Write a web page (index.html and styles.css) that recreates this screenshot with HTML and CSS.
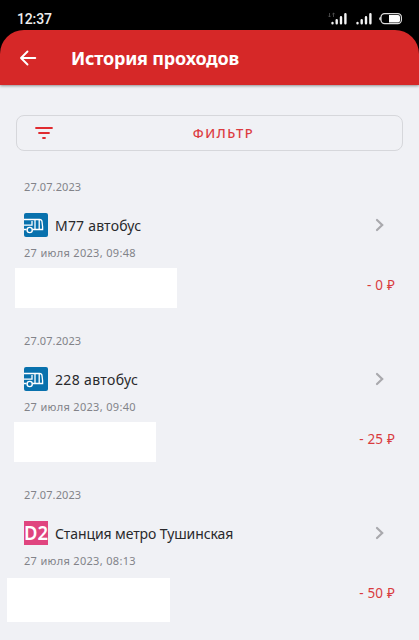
FILE: index.html
```
<!DOCTYPE html>
<html lang="ru">
<head>
    <meta charset="UTF-8">
    <meta name="viewport" content="width=device-width, initial-scale=1.0">
    <title>История проходов</title>
    <link rel="stylesheet" href="styles.css">
</head>
<body>
    <div class="status-bar">
        <span class="clock">12:37</span>
        <svg class="status-icons" width="76" height="14" viewBox="0 0 76 14">
            <g stroke="#555" stroke-width="0.8" fill="none">
                <path d="M2.5 1v4M1.3 3.8l1.2 1.2 1.2-1.2M6.5 5V1M5.3 2.2L6.5 1l1.2 1.2"/>
            </g>
            <g stroke="#f4f4f4" stroke-width="2.4" stroke-linecap="round">
                <path d="M5.5 10.9v.3M9.7 8.3v2.9M14 5.3v5.9M18.4 2.2v9M30.5 10.9v.3M34.7 8.3v2.9M39 5.3v5.9M43.4 2.2v9"/>
            </g>
            <rect x="54" y="1.7" width="20.4" height="10" rx="3.6" fill="none" stroke="#ddd" stroke-width="1.2"/>
            <path d="M53.6 4.8a2 2 0 0 0 0 3.8z" fill="#fff"/>
            <path d="M62 3h9a2 2 0 0 1 2 2v3.4a2 2 0 0 1-2 2h-9z" fill="#fff"/>
        </svg>
    </div>

    <header class="header">
        <svg class="back" width="18" height="18" viewBox="0 0 18 18">
            <path d="M16.3 9H2.2M8.5 2.5L2 9l6.5 6.5"/>
        </svg>
        <h1>История проходов</h1>
    </header>

    <main>
        <button class="filter" type="button">
            <svg width="20" height="14" viewBox="0 0 20 14">
                <path d="M2 2h16M5 7h10M9 12h2"/>
            </svg>
            <span>ФИЛЬТР</span>
        </button>

        <section class="trip">
            <p class="date">27.07.2023</p>
            <div class="trip-title">
                <svg class="badge" viewBox="0 0 24 24">
                    <rect width="24" height="24" rx="2" fill="#0871ad"/>
                    <path d="M0 6.500h15.500q2.300 0 2.500 2l.6 5.200v2.800H8.700M0 12.200h8V8M0 16.500h2.500" fill="none" stroke="#fff" stroke-width="1.3"/>
                    <path d="M11 7v9M15.200 7v9" stroke="#fff" stroke-width="1.3"/>
                    <circle cx="5.7" cy="17" r="2.6" fill="#0871ad" stroke="#fff" stroke-width="1.4"/>
                </svg>
                <h2 class="name-m77">М77 автобус</h2>
                <svg class="chevron" width="10" height="14" viewBox="0 0 10 14"><path d="M2 2l5.2 5L2 12"/></svg>
            </div>
            <p class="time">27 июля 2023, 09:48</p>
            <div class="trip-bottom">
                <div class="blank blank-first"></div>
                <span class="amount">- 0 ₽</span>
            </div>
        </section>

        <section class="trip">
            <p class="date">27.07.2023</p>
            <div class="trip-title">
                <svg class="badge" viewBox="0 0 24 24">
                    <rect width="24" height="24" rx="2" fill="#0871ad"/>
                    <path d="M0 6.500h15.500q2.300 0 2.500 2l.6 5.200v2.800H8.700M0 12.200h8V8M0 16.500h2.500" fill="none" stroke="#fff" stroke-width="1.3"/>
                    <path d="M11 7v9M15.200 7v9" stroke="#fff" stroke-width="1.3"/>
                    <circle cx="5.7" cy="17" r="2.6" fill="#0871ad" stroke="#fff" stroke-width="1.4"/>
                </svg>
                <h2 class="name-228">228 автобус</h2>
                <svg class="chevron" width="10" height="14" viewBox="0 0 10 14"><path d="M2 2l5.2 5L2 12"/></svg>
            </div>
            <p class="time">27 июля 2023, 09:40</p>
            <div class="trip-bottom">
                <div class="blank blank-second"></div>
                <span class="amount">- 25 ₽</span>
            </div>
        </section>

        <section class="trip">
            <p class="date">27.07.2023</p>
            <div class="trip-title">
                <svg class="badge" viewBox="0 0 24 24">
                    <rect width="24" height="24" fill="#e0457f"/>
                    <text class="badge-text" x="0" y="18.8" textLength="24" lengthAdjust="spacingAndGlyphs">D2</text>
                </svg>
                <h2 class="name-metro">Станция метро Тушинская</h2>
                <svg class="chevron" width="10" height="14" viewBox="0 0 10 14"><path d="M2 2l5.2 5L2 12"/></svg>
            </div>
            <p class="time">27 июля 2023, 08:13</p>
            <div class="trip-bottom">
                <div class="blank blank-third"></div>
                <span class="amount">- 50 ₽</span>
            </div>
        </section>
    </main>
</body>
</html>
```
FILE: styles.css
```
:root {
    --red: #d62828;
    --background: #f0f1f5;
    --text: #29292c;
    --muted: #828389;
}

* {
    margin: 0;
    padding: 0;
    box-sizing: border-box;
}

body {
    height: 640px;
    overflow: hidden;
    background: linear-gradient(#000 80px, var(--background) 80px);
    font-family: 'Noto Sans', sans-serif;
    color: var(--text);
}

.status-bar {
    height: 30px;
    padding: 7px 15px 0 17px;
    display: flex;
    justify-content: space-between;
    align-items: center;
}

.clock {
    font: 500 14px/20px Roboto, sans-serif;
    letter-spacing: -0.15px;
    color: #eee;
}

.status-icons {
    margin-right: 1px;
}

.header {
    height: 55px;
    padding: 1px 19px;
    display: flex;
    align-items: center;
    background-color: var(--red);
    border-radius: 24px 24px 0 0;
    box-shadow: 0 1px 3px rgba(0, 0, 0, 0.4);
}

.back {
    fill: none;
    stroke: #fff;
    stroke-width: 1.9;
    stroke-linecap: round;
    stroke-linejoin: round;
}

.header h1 {
    margin-left: 34px;
    color: #fff;
    font-size: 18px;
    font-weight: 700;
    line-height: 26px;
    letter-spacing: -0.2px;
    white-space: nowrap;
}

main {
    padding: 30px 16px 0;
}

.filter {
    width: 100%;
    height: 36px;
    padding: 0 9px 0 17px;
    display: grid;
    grid-template-columns: 20px 1fr;
    align-items: center;
    background: none;
    border: 1px solid #d6d7db;
    border-radius: 8px;
    color: #dc3b3f;
    font: 500 13px/18px 'Noto Sans', sans-serif;
    letter-spacing: 1.5px;
}

.filter svg {
    fill: none;
    stroke: #e02b30;
    stroke-width: 1.8;
    stroke-linecap: round;
}

.trip {
    height: 154px;
    padding: 0 8px;
}

.trip:first-of-type {
    margin-top: 27px;
}

.date {
    height: 18px;
    font-size: 11px;
    line-height: 18px;
    letter-spacing: 0.1px;
    color: var(--muted);
}

.trip-title {
    height: 24px;
    margin-top: 17px;
    display: flex;
    align-items: center;
}

.badge {
    width: 24px;
    height: 24px;
    overflow: hidden;
}

.badge-text {
    font-family: 'Noto Sans', sans-serif;
    font-size: 20px;
    font-weight: 600;
    fill: #fff;
}

.trip-title h2 {
    margin-left: 7px;
    padding-top: 2px;
    font-size: 14px;
    font-weight: 400;
    line-height: 24px;
    white-space: nowrap;
}

.name-m77 {
    letter-spacing: 0.2px;
}

.name-228 {
    letter-spacing: 0.35px;
}

.name-metro {
    letter-spacing: -0.1px;
}

.chevron {
    margin-left: auto;
    margin-right: 10px;
    fill: none;
    stroke: #a9a9ad;
    stroke-width: 2.2;
    stroke-linecap: round;
}

.time {
    height: 18px;
    margin-top: 7px;
    font-size: 11px;
    line-height: 18px;
    letter-spacing: 0.32px;
    color: var(--muted);
    white-space: nowrap;
}

.trip-bottom {
    margin-top: 6px;
    display: flex;
    justify-content: space-between;
    align-items: flex-start;
}

.blank {
    background-color: #fff;
}

.blank-first {
    width: 162px;
    height: 40px;
    margin-left: -9px;
}

.blank-second {
    width: 142px;
    height: 40px;
    margin-left: -10px;
}

.blank-third {
    width: 163px;
    height: 44px;
    margin-left: -17px;
    margin-top: 2px;
}

.amount {
    margin-top: 7px;
    font-size: 13.5px;
    line-height: 20px;
    letter-spacing: 0.2px;
    color: #d93b3e;
    white-space: nowrap;
}
```
